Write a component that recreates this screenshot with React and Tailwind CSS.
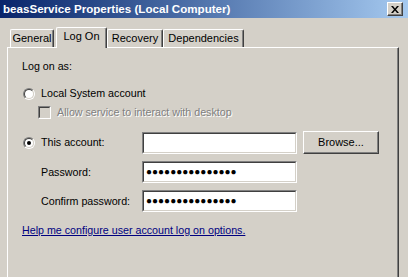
import React from 'react';

const font = { fontFamily: '"Liberation Sans", Arial, sans-serif' };

const Radio = ({ checked }) => (
  <div className="w-[12px] h-[12px] rounded-full border border-t-[#808080] border-l-[#808080] border-r-white border-b-white shrink-0">
    <div className="w-full h-full rounded-full border border-t-[#404040] border-l-[#404040] border-r-[#d4d0c8] border-b-[#d4d0c8] bg-white flex items-center justify-center">
      {checked && <div className="w-[4px] h-[4px] rounded-full bg-black"></div>}
    </div>
  </div>
);

const Field = ({ dots }) => (
  <div className="w-[155px] h-[22px] border border-t-[#808080] border-l-[#808080] border-r-white border-b-white">
    <div className="w-full h-full border border-t-[#404040] border-l-[#404040] border-r-[#d4d0c8] border-b-[#d4d0c8] bg-white flex items-center pl-[2px]">
      {dots && <span className="text-[10px] leading-none text-black">●●●●●●●●●●●●●●●</span>}
    </div>
  </div>
);

const Tab = ({ label, width, selected, className = '' }) => (
  <div
    className={`${width} ${selected ? 'h-[21px] relative z-10 -mb-[1px] bg-[#d4d0c8] pb-[3px]' : 'h-[18px]'} ${className} flex items-center justify-center border-t border-l border-t-white border-l-white border-r border-r-[#404040] shadow-[inset_-1px_0_0_#808080] rounded-t-[2px] text-[11px] text-black`}
  >
    {label}
  </div>
);

export default function App() {
  return (
    <div className="w-[408px] h-[277px] bg-[#d4d0c8] overflow-hidden flex flex-col" style={font}>
      {/* Title bar */}
      <div className="h-[18px] shrink-0 flex items-center justify-between pl-[3px] pr-[5px] bg-gradient-to-r from-[#0a246a] to-[#a6caf0]">
        <span className="text-white font-bold text-[11.6px] leading-none">beasService Properties (Local Computer)</span>
        <div className="w-[16px] h-[14px] bg-[#d4d0c8] border border-t-white border-l-white border-r-[#404040] border-b-[#404040] shadow-[inset_-1px_-1px_0_#808080] flex items-center justify-center">
          <svg width="8" height="7" viewBox="0 0 8 7">
            <path d="M0 0h2l2 2.5 2-2.5h2l-3 3.5 3 3.5h-2l-2-2.5-2 2.5h-2l3-3.5z" fill="#000" />
          </svg>
        </div>
      </div>

      {/* Tabs */}
      <div className="pt-[8px] pl-[7px] flex items-end h-[29px] shrink-0">
        <Tab label="General" width="w-[44px]" className="ml-[3px]" />
        <Tab label="Log On" width="w-[51px]" selected className="ml-[2px]" />
        <Tab label="Recovery" width="w-[56px]" />
        <Tab label="Dependencies" width="w-[81px]" />
      </div>

      {/* Panel */}
      <div className="flex-1 ml-[7px] mr-[9px] border-t border-l border-t-white border-l-white border-r border-r-[#404040] shadow-[inset_-1px_0_0_#808080] pl-[14px] pt-[12px] text-[10.7px] text-black leading-[13px]">
        <div className="h-[13px]">Log on as:</div>

        <div className="mt-[14px] h-[13px] flex items-center gap-[6px] pl-[1px]">
          <Radio />
          <span>Local System account</span>
        </div>

        <div className="mt-[6px] h-[13px] flex items-center gap-[6px] pl-[16px]">
          <div className="w-[13px] h-[13px] border border-t-[#808080] border-l-[#808080] border-r-white border-b-white shrink-0">
            <div className="w-full h-full border border-t-[#404040] border-l-[#404040] border-r-[#d4d0c8] border-b-[#d4d0c8] bg-[#d4d0c8]"></div>
          </div>
          <span className="text-[#808080] [text-shadow:1px_1px_0_#ffffff]">Allow service to interact with desktop</span>
        </div>

        <div className="mt-[12px] flex items-center">
          <div className="w-[120px] flex items-center gap-[6px] pl-[1px]">
            <Radio checked />
            <span>This account:</span>
          </div>
          <Field />
          <button className="ml-[6px] w-[76px] h-[23px] bg-[#d4d0c8] border border-t-white border-l-white border-r-[#404040] border-b-[#404040] shadow-[inset_-1px_-1px_0_#808080] text-[11px] text-black">
            Browse...
          </button>
        </div>

        <div className="mt-[7px] flex items-center">
          <div className="w-[120px] pl-[19px]">Password:</div>
          <Field dots />
        </div>

        <div className="mt-[7px] flex items-center">
          <div className="w-[120px] pl-[19px]">Confirm password:</div>
          <Field dots />
        </div>

        <div className="mt-[12px]">
          <a className="text-[#000080] underline underline-offset-[1px]">Help me configure user account log on options.</a>
        </div>
      </div>
    </div>
  );
}
